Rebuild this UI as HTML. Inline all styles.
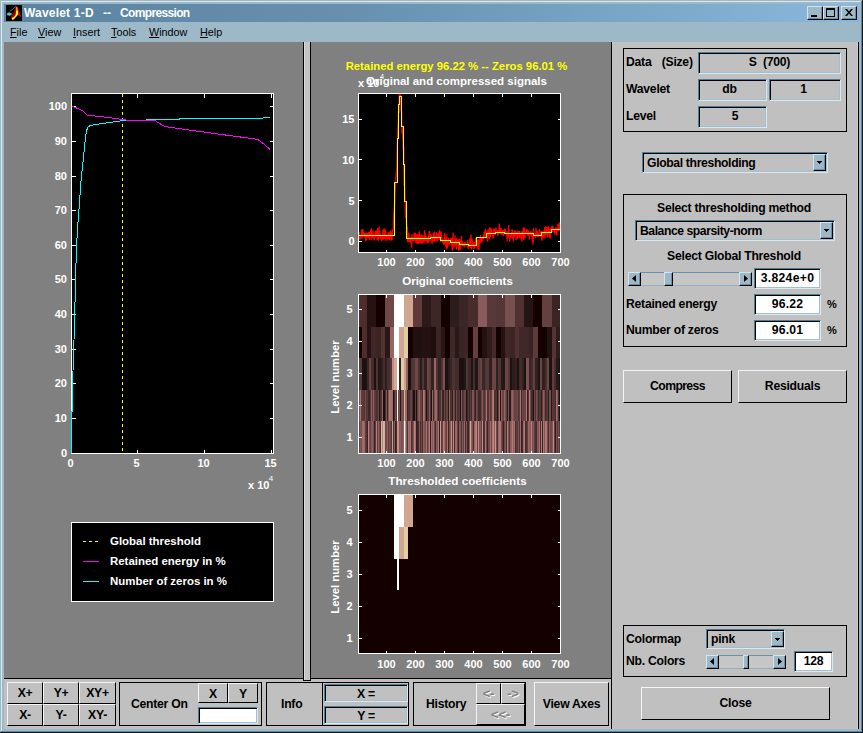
<!DOCTYPE html>
<html><head><meta charset="utf-8"><title>Wavelet 1-D -- Compression</title>
<style>
*{box-sizing:border-box;margin:0;padding:0}
html,body{width:863px;height:733px;overflow:hidden;background:#9db9c8}
body{position:relative;font-family:"Liberation Sans",sans-serif;font-size:12px;color:#000}
.a{position:absolute}
.ui{font-weight:bold;font-size:12.2px;letter-spacing:-.25px;line-height:14px;white-space:pre}
.btn{position:absolute;background:#c0c0c0;border-style:solid;border-width:1px;border-color:#f4f4f4 #000 #000 #f4f4f4;font-weight:bold;font-size:12.2px;letter-spacing:-.25px;text-align:center;white-space:pre}
.sunk{position:absolute;background:#c0c0c0;border-style:solid;border-width:1px;border-color:#4c7c9c #dce8f0 #dce8f0 #4c7c9c;box-shadow:inset 1px 1px 0 #000,inset -1px -1px 0 #a0c0d0;font-weight:bold;font-size:12.2px;letter-spacing:-.25px;text-align:center;white-space:pre}
.white{background:#fff}
.frame{position:absolute;border:1px solid #000}
.sb{position:absolute;background:#9db9c8;border-style:solid;border-width:1px;border-color:#d4e4ee #000 #000 #d4e4ee;box-shadow:inset -1px -1px 0 #6a8ea8}
.trk{position:absolute;background:#c6c6c6;border-top:1px solid #6a90aa;border-bottom:1px solid #8fb2c8}
svg{position:absolute;overflow:visible}
.pt{font-family:"Liberation Sans",sans-serif;font-weight:bold;font-size:11px;fill:#fff}
</style></head><body>
<!-- window border -->
<div class="a" style="left:1px;top:1px;width:860px;height:1px;background:#dce8ee"></div>
<div class="a" style="left:1px;top:1px;width:1px;height:730px;background:#dce8ee"></div>
<div class="a" style="left:861px;top:1px;width:1px;height:731px;background:#5a86a6"></div>
<div class="a" style="left:1px;top:731px;width:861px;height:1px;background:#5a86a6"></div>
<div class="a" style="left:862px;top:0;width:1px;height:733px;background:#101820"></div>
<div class="a" style="left:0;top:732px;width:863px;height:1px;background:#101820"></div>
<!-- title bar -->
<div class="a" style="left:4px;top:4px;width:855px;height:18px;background:linear-gradient(to right,#5a84a0 0%,#6690ae 40%,#8ab8dc 100%)"></div>
<svg style="left:6px;top:5px" width="16" height="16" viewBox="0 0 16 16"><rect width="16" height="16" fill="#000"/>
<path d="M4.4 6 L7 4 L9.7 1.3" stroke="#0e8484" stroke-width="1" fill="none"/>
<path d="M0.9 8.7 L2.6 7.6 L4.6 5.9" stroke="#0a5c5c" stroke-width=".8" fill="none"/>
<ellipse cx="3.2" cy="9.1" rx="2.6" ry="1.7" fill="#1fc4c4"/>
<ellipse cx="3.7" cy="9.1" rx="1.8" ry="1.1" fill="#a4a4a4"/>
<path d="M10 1 L11.5 2 L12.5 5 L14 9 L15.7 12.6 L13.6 11 L12 9.8 L10.4 11.5 L8.5 13.5 L6.8 15 L5.6 13.6 L5 11.5 L6 10 L8 7 L9.3 3.5 Z" fill="#e40000"/>
<path d="M9.3 4 L8 7 L6 10 L5.1 11.6 L6 12.6 L8.5 11 L9.6 8 L9.8 5 Z" fill="#8c0000"/>
<path d="M9.8 1.5 L11.4 2.2 L11.9 5.6 L10 5.6 Z" fill="#ff8a00"/>
<path d="M10 5.4 L11.9 5.4 L12 9.4 L10.8 11 L9 13 L7 15.1 L5.7 14 L6 12.9 L8 12 L9.6 10 L10 8 Z" fill="#ffff00"/>
</svg>
<div class="a" style="left:24px;top:5px;height:16px;line-height:16px;color:#fff;font-weight:bold;font-size:12px;white-space:pre;letter-spacing:.2px">Wavelet 1-D</div>
<div class="a" style="left:103px;top:5px;height:16px;line-height:16px;color:#fff;font-weight:bold;font-size:12px;white-space:pre">--</div>
<div class="a" style="left:120px;top:5px;height:16px;line-height:16px;color:#fff;font-weight:bold;font-size:12px;white-space:pre;letter-spacing:-.65px">Compression</div>
<!-- caption buttons -->
<div class="sb" style="left:807px;top:6px;width:16px;height:14px"></div>
<div class="a" style="left:811px;top:15px;width:6px;height:2px;background:#000"></div>
<div class="sb" style="left:823px;top:6px;width:16px;height:14px"></div>
<div class="a" style="left:826px;top:8px;width:9px;height:9px;border:1px solid #000;border-top-width:2px"></div>
<div class="sb" style="left:841px;top:6px;width:16px;height:14px"></div>
<svg style="left:845px;top:9px" width="8" height="7" viewBox="0 0 8 7"><path d="M0 0h2l2 2.4L6 0h2L5 3.5 8 7H6L4 4.6 2 7H0l3-3.5z" fill="#000"/></svg>
<!-- menu bar -->
<div class="a" style="left:4px;top:22px;width:855px;height:20px;background:#9db9c8"></div>
<div class="a" style="left:10px;top:24px;height:16px;line-height:16px;font-size:10.8px;white-space:pre"><u>F</u>ile</div>
<div class="a" style="left:38px;top:24px;height:16px;line-height:16px;font-size:10.8px;white-space:pre"><u>V</u>iew</div>
<div class="a" style="left:73px;top:24px;height:16px;line-height:16px;font-size:10.8px;white-space:pre"><u>I</u>nsert</div>
<div class="a" style="left:111px;top:24px;height:16px;line-height:16px;font-size:10.8px;white-space:pre"><u>T</u>ools</div>
<div class="a" style="left:149px;top:24px;height:16px;line-height:16px;font-size:10.8px;white-space:pre"><u>W</u>indow</div>
<div class="a" style="left:200px;top:24px;height:16px;line-height:16px;font-size:10.8px;white-space:pre"><u>H</u>elp</div>
<!-- client area -->
<div class="a" style="left:4px;top:42px;width:855px;height:687px;background:#c0c0c0"></div>
<div class="a" style="left:4px;top:42px;width:299px;height:636px;background:#808080"></div>
<div class="a" style="left:311px;top:42px;width:300px;height:636px;background:#808080"></div>
<div class="a" style="left:4px;top:678px;width:607px;height:1px;background:#000"></div>
<div class="a" style="left:303px;top:42px;width:8px;height:639px;background:#c4c4c4;border:1px solid #000;border-top:none;box-shadow:inset 1px 0 0 #dcdcdc"></div>
<div class="a" style="left:611px;top:42px;width:1px;height:687px;background:#000"></div>
<div class="a" style="left:857px;top:42px;width:1px;height:687px;background:#cdcdcd"></div>
<div class="a" style="left:858px;top:42px;width:1px;height:687px;background:#000"></div>
<!-- right panel -->
<div class="frame" style="left:623px;top:48px;width:224px;height:84px"></div>
<div class="a ui" style="left:626px;top:55px;word-spacing:2px">Data  (Size)</div>
<div class="a ui" style="left:626px;top:82px">Wavelet</div>
<div class="a ui" style="left:626px;top:109px">Level</div>
<div class="sunk" style="left:698px;top:52px;width:143px;height:22px;line-height:19px">S  (700)</div>
<div class="sunk" style="left:698px;top:79px;width:69px;height:22px;line-height:19px;padding-right:6px">db</div>
<div class="sunk" style="left:769px;top:79px;width:72px;height:22px;line-height:19px;padding-right:3px">1</div>
<div class="sunk" style="left:698px;top:106px;width:69px;height:22px;line-height:19px;padding-left:5px">5</div>

<div class="sunk" style="left:642px;top:152px;width:186px;height:21px;line-height:20px;text-align:left;padding-left:4px;letter-spacing:-.35px">Global thresholding</div>
<div class="sb" style="left:813px;top:154px;width:13px;height:17px"></div>
<svg style="left:817px;top:161px" width="5" height="3" shape-rendering="crispEdges"><path d="M0 0h5v1h-1v1h-1v1h-1v-1h-1v-1h-1z" fill="#000"/></svg>

<div class="frame" style="left:623px;top:194px;width:224px;height:153px"></div>
<div class="a ui" style="left:634px;top:201px;width:200px;text-align:center">Select thresholding method</div>
<div class="sunk" style="left:635px;top:220px;width:200px;height:21px;line-height:20px;text-align:left;padding-left:4px;letter-spacing:-.45px">Balance sparsity-norm</div>
<div class="sb" style="left:820px;top:222px;width:13px;height:17px"></div>
<svg style="left:824px;top:229px" width="5" height="3" shape-rendering="crispEdges"><path d="M0 0h5v1h-1v1h-1v1h-1v-1h-1v-1h-1z" fill="#000"/></svg>
<div class="a ui" style="left:634px;top:249px;width:200px;text-align:center">Select Global Threshold</div>
<div class="trk" style="left:628px;top:272px;width:124px;height:14px"></div>
<div class="sb" style="left:628px;top:272px;width:13px;height:14px"></div>
<svg style="left:632px;top:275px" width="4" height="7"><path d="M4 0v7L0 3.5z" fill="#000"/></svg>
<div class="sb" style="left:739px;top:272px;width:13px;height:14px"></div>
<svg style="left:744px;top:275px" width="4" height="7"><path d="M0 0v7l4-3.5z" fill="#000"/></svg>
<div class="sb" style="left:664px;top:272px;width:9px;height:14px"></div>
<div class="sunk white" style="left:754px;top:268px;width:67px;height:21px;line-height:18px;letter-spacing:.3px">3.824e+0</div>
<div class="a ui" style="left:626px;top:297px">Retained energy</div>
<div class="sunk white" style="left:754px;top:294px;width:67px;height:21px;line-height:18px;letter-spacing:.2px">96.22</div>
<div class="a ui" style="left:827px;top:297px;font-size:11px">%</div>
<div class="a ui" style="left:626px;top:323px">Number of zeros</div>
<div class="sunk white" style="left:754px;top:320px;width:67px;height:21px;line-height:18px;letter-spacing:.2px">96.01</div>
<div class="a ui" style="left:827px;top:323px;font-size:11px">%</div>

<div class="btn" style="left:623px;top:370px;width:109px;height:33px;line-height:30px;letter-spacing:-.6px">Compress</div>
<div class="btn" style="left:738px;top:370px;width:109px;height:33px;line-height:30px">Residuals</div>

<div class="frame" style="left:623px;top:625px;width:224px;height:52px"></div>
<div class="a ui" style="left:626px;top:632px">Colormap</div>
<div class="sunk" style="left:706px;top:629px;width:79px;height:20px;line-height:19px;text-align:left;padding-left:4px">pink</div>
<div class="sb" style="left:771px;top:631px;width:13px;height:16px"></div>
<svg style="left:775px;top:638px" width="5" height="3" shape-rendering="crispEdges"><path d="M0 0h5v1h-1v1h-1v1h-1v-1h-1v-1h-1z" fill="#000"/></svg>
<div class="a ui" style="left:626px;top:654px">Nb. Colors</div>
<div class="trk" style="left:706px;top:655px;width:80px;height:14px"></div>
<div class="sb" style="left:706px;top:655px;width:13px;height:14px"></div>
<svg style="left:710px;top:658px" width="4" height="7"><path d="M4 0v7L0 3.5z" fill="#000"/></svg>
<div class="sb" style="left:773px;top:655px;width:13px;height:14px"></div>
<svg style="left:778px;top:658px" width="4" height="7"><path d="M0 0v7l4-3.5z" fill="#000"/></svg>
<div class="sb" style="left:743px;top:655px;width:6px;height:14px"></div>
<div class="sunk white" style="left:794px;top:651px;width:39px;height:21px;line-height:18px">128</div>
<div class="btn" style="left:641px;top:687px;width:189px;height:33px;line-height:30px">Close</div>
<!-- bottom bar -->
<div class="btn" style="left:7px;top:682px;width:36px;height:22px;line-height:21px">X+</div>
<div class="btn" style="left:43px;top:682px;width:36px;height:22px;line-height:21px">Y+</div>
<div class="btn" style="left:79px;top:682px;width:37px;height:22px;line-height:21px">XY+</div>
<div class="btn" style="left:7px;top:704px;width:36px;height:22px;line-height:21px">X-</div>
<div class="btn" style="left:43px;top:704px;width:36px;height:22px;line-height:21px">Y-</div>
<div class="btn" style="left:79px;top:704px;width:37px;height:22px;line-height:21px">XY-</div>

<div class="frame" style="left:119px;top:682px;width:143px;height:44px"></div>
<div class="a ui" style="left:131px;top:697px">Center On</div>
<div class="btn" style="left:198px;top:683px;width:30px;height:20px;line-height:20px">X</div>
<div class="btn" style="left:228px;top:683px;width:30px;height:20px;line-height:20px">Y</div>
<div class="sunk white" style="left:198px;top:707px;width:60px;height:17px"></div>

<div class="frame" style="left:266px;top:682px;width:143px;height:44px"></div>
<div class="a" style="left:322px;top:682px;width:1px;height:44px;background:#000"></div>
<div class="a ui" style="left:281px;top:697px">Info</div>
<div class="sunk" style="left:324px;top:684px;width:84px;height:18px;line-height:19px">X =</div>
<div class="sunk" style="left:324px;top:706px;width:84px;height:18px;line-height:19px">Y =</div>

<div class="frame" style="left:413px;top:682px;width:113px;height:44px"></div>
<div class="a ui" style="left:426px;top:697px">History</div>
<div class="btn" style="left:476px;top:683px;width:25px;height:21px;line-height:20px;font-size:13px;color:#808080;text-shadow:1px 1px 0 #fff">&lt;-</div>
<div class="btn" style="left:501px;top:683px;width:24px;height:21px;line-height:20px;font-size:13px;color:#808080;text-shadow:1px 1px 0 #fff">-&gt;</div>
<div class="btn" style="left:476px;top:704px;width:49px;height:21px;line-height:20px;font-size:13px;color:#808080;text-shadow:1px 1px 0 #fff">&lt;&lt;-</div>
<div class="btn" style="left:534px;top:682px;width:75px;height:44px;line-height:43px">View Axes</div>
<svg style="left:0;top:0" width="863" height="733" viewBox="0 0 863 733">
<rect x="71.5" y="93.5" width="202.0" height="360.0" fill="#000"/>
<line x1="122.5" y1="93.5" x2="122.5" y2="453.5" stroke="#ffff00" stroke-width="1" stroke-dasharray="3,3" shape-rendering="crispEdges"/>
<g stroke="#fff" stroke-width="1" shape-rendering="crispEdges" fill="none"><rect x="71.5" y="93.5" width="202.0" height="360.0"/><line x1="71.5" y1="453.5" x2="75.5" y2="453.5"/><line x1="269.5" y1="453.5" x2="273.5" y2="453.5"/><line x1="71.5" y1="418.5" x2="75.5" y2="418.5"/><line x1="269.5" y1="418.5" x2="273.5" y2="418.5"/><line x1="71.5" y1="383.5" x2="75.5" y2="383.5"/><line x1="269.5" y1="383.5" x2="273.5" y2="383.5"/><line x1="71.5" y1="349.5" x2="75.5" y2="349.5"/><line x1="269.5" y1="349.5" x2="273.5" y2="349.5"/><line x1="71.5" y1="314.5" x2="75.5" y2="314.5"/><line x1="269.5" y1="314.5" x2="273.5" y2="314.5"/><line x1="71.5" y1="279.5" x2="75.5" y2="279.5"/><line x1="269.5" y1="279.5" x2="273.5" y2="279.5"/><line x1="71.5" y1="245.5" x2="75.5" y2="245.5"/><line x1="269.5" y1="245.5" x2="273.5" y2="245.5"/><line x1="71.5" y1="210.5" x2="75.5" y2="210.5"/><line x1="269.5" y1="210.5" x2="273.5" y2="210.5"/><line x1="71.5" y1="176.5" x2="75.5" y2="176.5"/><line x1="269.5" y1="176.5" x2="273.5" y2="176.5"/><line x1="71.5" y1="141.5" x2="75.5" y2="141.5"/><line x1="269.5" y1="141.5" x2="273.5" y2="141.5"/><line x1="71.5" y1="106.5" x2="75.5" y2="106.5"/><line x1="269.5" y1="106.5" x2="273.5" y2="106.5"/><line x1="71.5" y1="93.5" x2="71.5" y2="97.5"/><line x1="71.5" y1="449.5" x2="71.5" y2="453.5"/><line x1="137.5" y1="93.5" x2="137.5" y2="97.5"/><line x1="137.5" y1="449.5" x2="137.5" y2="453.5"/><line x1="204.5" y1="93.5" x2="204.5" y2="97.5"/><line x1="204.5" y1="449.5" x2="204.5" y2="453.5"/><line x1="271.5" y1="93.5" x2="271.5" y2="97.5"/><line x1="271.5" y1="449.5" x2="271.5" y2="453.5"/></g>
<polyline points="71.5,453.0 71.5,412.0 72.5,411.0 73.0,371.0 74.0,340.0 74.8,311.0 75.5,280.0 76.4,249.5 77.6,227.5 79.1,207.8 80.8,183.3 83.3,158.8 85.0,141.7 86.5,130.6 88.0,127.2 89.6,125.8 93.0,125.0 97.0,124.4 103.0,123.4 110.0,122.4 116.0,121.6 122.3,120.6 130.0,120.5 146.0,120.5 147.0,119.5 157.0,119.5 158.0,119.4 179.0,119.4 180.0,118.4 262.0,118.4 264.0,117.5 270.0,117.5" fill="none" stroke="#00ffff" stroke-width="1" shape-rendering="crispEdges"/>
<polyline points="71.8,106.0 76.0,107.8 82.0,110.4 85.0,113.0 87.5,115.2 92.0,115.6 97.0,116.2 104.0,117.0 110.0,117.7 116.0,118.6 122.3,119.5 130.0,120.5 140.0,120.5 155.0,120.5 158.0,122.5 162.0,124.8 165.0,126.6 172.0,127.6 179.0,128.6 190.0,130.2 200.0,131.5 215.0,133.6 230.0,135.6 245.0,137.6 255.0,139.0 258.0,139.7 262.0,142.5 266.0,146.0 270.0,149.3" fill="none" stroke="#ff00ff" stroke-width="1" shape-rendering="crispEdges"/>
<text class="pt" x="67" y="457.3" text-anchor="end">0</text>
<text class="pt" x="67" y="422.3" text-anchor="end">10</text>
<text class="pt" x="67" y="387.3" text-anchor="end">20</text>
<text class="pt" x="67" y="353.3" text-anchor="end">30</text>
<text class="pt" x="67" y="318.3" text-anchor="end">40</text>
<text class="pt" x="67" y="283.3" text-anchor="end">50</text>
<text class="pt" x="67" y="249.3" text-anchor="end">60</text>
<text class="pt" x="67" y="214.3" text-anchor="end">70</text>
<text class="pt" x="67" y="180.3" text-anchor="end">80</text>
<text class="pt" x="67" y="145.3" text-anchor="end">90</text>
<text class="pt" x="67" y="110.3" text-anchor="end">100</text>
<text class="pt" x="70.6" y="466.6" text-anchor="middle">0</text>
<text class="pt" x="136.6" y="466.6" text-anchor="middle">5</text>
<text class="pt" x="203.6" y="466.6" text-anchor="middle">10</text>
<text class="pt" x="270.6" y="466.6" text-anchor="middle">15</text>
<text class="pt" x="248" y="489">x 10</text><text class="pt" x="268.8" y="480.6" style="font-size:8px;font-weight:normal">4</text>
<rect x="71.5" y="522.5" width="202" height="79" fill="#000" stroke="#fff" shape-rendering="crispEdges"/>
<line x1="83" y1="541.5" x2="99" y2="541.5" stroke="#ffff00" stroke-dasharray="3,3" shape-rendering="crispEdges"/>
<line x1="83" y1="561.5" x2="99" y2="561.5" stroke="#ff00ff" shape-rendering="crispEdges"/>
<line x1="83" y1="581.5" x2="99" y2="581.5" stroke="#00ffff" shape-rendering="crispEdges"/>
<text class="pt" x="110" y="545.3" style="font-size:11.45px">Global threshold</text>
<text class="pt" x="110" y="565.3" style="font-size:11.45px">Retained energy in %</text>
<text class="pt" x="110" y="585.3" style="font-size:11.45px">Number of zeros in %</text>
<text class="pt" x="456.5" y="69.6" text-anchor="middle" style="fill:#ffff00;font-size:11.3px">Retained energy 96.22 % -- Zeros 96.01 %</text>
<text class="pt" x="456.5" y="85" text-anchor="middle" style="font-size:11.5px">Original and compressed signals</text>
<text class="pt" x="358" y="87">x 10</text><text class="pt" x="380" y="79" style="font-size:7.5px;font-weight:normal">4</text>
<text class="pt" x="457.5" y="285" text-anchor="middle" style="font-size:11.5px">Original coefficients</text>
<text class="pt" x="457.5" y="485" text-anchor="middle" style="font-size:11.7px">Thresholded coefficients</text>
<rect x="358.5" y="93.5" width="202.0" height="159.0" fill="#000"/>
<path d="M358.0,234.6 L358.3,237.1 L358.6,234.7 L358.9,234.4 L359.2,232.3 L359.4,234.7 L359.7,239.1 L360.0,236.8 L360.3,238.8 L360.6,236.2 L360.9,236.7 L361.2,236.0 L361.5,229.9 L361.8,238.2 L362.0,237.1 L362.3,237.0 L362.6,229.8 L362.9,229.6 L363.2,232.5 L363.5,233.9 L363.8,236.4 L364.1,235.2 L364.4,237.1 L364.6,233.3 L364.9,236.4 L365.2,236.7 L365.5,233.2 L365.8,241.1 L366.1,237.2 L366.4,239.4 L366.7,233.4 L367.0,233.0 L367.2,234.3 L367.5,235.0 L367.8,237.5 L368.1,236.2 L368.4,233.9 L368.7,232.2 L369.0,233.7 L369.3,239.4 L369.6,232.7 L369.8,236.2 L370.1,236.8 L370.4,230.5 L370.7,235.6 L371.0,239.7 L371.3,228.8 L371.6,234.3 L371.9,235.0 L372.2,232.7 L372.4,237.0 L372.7,235.2 L373.0,230.6 L373.3,238.1 L373.6,237.6 L373.9,238.5 L374.2,240.2 L374.5,236.6 L374.8,235.8 L375.1,231.1 L375.3,237.4 L375.6,233.4 L375.9,233.9 L376.2,231.2 L376.5,232.2 L376.8,233.6 L377.1,239.7 L377.4,228.7 L377.7,230.6 L377.9,236.2 L378.2,240.2 L378.5,237.3 L378.8,229.1 L379.1,227.1 L379.4,236.6 L379.7,233.0 L380.0,231.7 L380.3,238.6 L380.5,239.0 L380.8,235.9 L381.1,236.2 L381.4,236.8 L381.7,240.7 L382.0,237.4 L382.3,237.1 L382.6,237.2 L382.9,230.2 L383.1,239.6 L383.4,238.6 L383.7,237.1 L384.0,228.9 L384.3,233.3 L384.6,238.2 L384.9,229.4 L385.2,234.8 L385.5,238.8 L385.7,231.1 L386.0,240.7 L386.3,237.2 L386.6,234.9 L386.9,236.5 L387.2,237.5 L387.5,235.8 L387.8,239.2 L388.1,233.2 L388.3,234.0 L388.6,238.8 L388.9,235.5 L389.2,232.5 L389.5,238.5 L389.8,240.2 L390.1,233.9 L390.4,230.8 L390.7,235.0 L390.9,234.9 L391.2,234.4 L391.5,240.0 L391.8,232.0 L392.1,239.6 L392.4,231.2 L392.7,229.9 L393.0,231.0 L393.3,228.9 L393.5,222.7 L393.8,215.3 L394.1,211.0 L394.4,205.4 L394.7,201.6 L395.0,191.7 L395.3,188.1 L395.6,184.0 L395.9,176.8 L396.1,176.6 L396.4,171.3 L396.7,174.7 L397.0,161.2 L397.3,146.8 L397.6,136.5 L397.9,127.9 L398.2,123.6 L398.5,111.7 L398.7,110.3 L399.0,112.7 L399.3,94.0 L399.6,94.0 L399.9,95.5 L400.2,94.0 L400.5,95.4 L400.8,96.8 L401.1,107.6 L401.3,110.6 L401.6,111.8 L401.9,133.1 L402.2,127.7 L402.5,128.5 L402.8,136.6 L403.1,141.5 L403.4,150.4 L403.7,146.1 L403.9,167.6 L404.2,185.2 L404.5,180.4 L404.8,192.0 L405.1,203.1 L405.4,208.4 L405.7,217.5 L406.0,206.4 L406.3,218.9 L406.5,222.8 L406.8,231.6 L407.1,235.7 L407.4,227.1 L407.7,241.8 L408.0,233.4 L408.3,240.5 L408.6,233.3 L408.9,238.8 L409.2,242.1 L409.4,237.7 L409.7,238.8 L410.0,240.8 L410.3,238.7 L410.6,237.9 L410.9,243.3 L411.2,241.7 L411.5,237.2 L411.8,247.3 L412.0,234.4 L412.3,241.2 L412.6,237.3 L412.9,238.6 L413.2,240.5 L413.5,238.9 L413.8,240.3 L414.1,233.2 L414.4,233.2 L414.6,240.2 L414.9,235.0 L415.2,234.8 L415.5,233.3 L415.8,242.4 L416.1,240.7 L416.4,243.1 L416.7,235.1 L417.0,238.2 L417.2,234.4 L417.5,240.7 L417.8,243.4 L418.1,235.3 L418.4,243.3 L418.7,241.5 L419.0,237.6 L419.3,231.7 L419.6,242.8 L419.8,237.9 L420.1,236.2 L420.4,239.5 L420.7,239.6 L421.0,243.1 L421.3,234.8 L421.6,241.9 L421.9,243.1 L422.2,243.0 L422.4,237.6 L422.7,235.7 L423.0,241.6 L423.3,238.6 L423.6,238.6 L423.9,242.9 L424.2,237.3 L424.5,230.6 L424.8,236.7 L425.0,231.9 L425.3,240.7 L425.6,239.0 L425.9,236.0 L426.2,238.0 L426.5,240.7 L426.8,238.3 L427.1,242.4 L427.4,237.8 L427.6,241.2 L427.9,242.7 L428.2,243.1 L428.5,235.6 L428.8,240.7 L429.1,231.6 L429.4,234.2 L429.7,231.3 L430.0,241.3 L430.2,233.7 L430.5,237.6 L430.8,237.0 L431.1,237.5 L431.4,235.6 L431.7,238.4 L432.0,243.5 L432.3,237.7 L432.6,239.4 L432.8,240.9 L433.1,236.9 L433.4,233.4 L433.7,235.6 L434.0,240.9 L434.3,232.0 L434.6,236.1 L434.9,241.4 L435.2,240.7 L435.4,238.1 L435.7,240.7 L436.0,238.6 L436.3,234.2 L436.6,232.7 L436.9,235.8 L437.2,240.9 L437.5,236.7 L437.8,235.5 L438.0,236.0 L438.3,233.5 L438.6,238.1 L438.9,234.6 L439.2,239.7 L439.5,230.7 L439.8,239.6 L440.1,236.4 L440.4,232.1 L440.6,241.6 L440.9,238.3 L441.2,231.8 L441.5,236.3 L441.8,240.1 L442.1,237.7 L442.4,241.8 L442.7,241.6 L443.0,241.4 L443.3,240.3 L443.5,244.2 L443.8,242.0 L444.1,241.3 L444.4,233.3 L444.7,243.1 L445.0,244.5 L445.3,239.2 L445.6,238.6 L445.9,246.6 L446.1,234.4 L446.4,242.4 L446.7,248.8 L447.0,237.8 L447.3,243.4 L447.6,247.4 L447.9,240.7 L448.2,243.0 L448.5,244.1 L448.7,238.2 L449.0,240.8 L449.3,242.1 L449.6,243.9 L449.9,241.0 L450.2,240.5 L450.5,238.1 L450.8,240.3 L451.1,244.4 L451.3,241.8 L451.6,238.6 L451.9,238.7 L452.2,250.3 L452.5,245.2 L452.8,243.6 L453.1,232.9 L453.4,244.3 L453.7,243.8 L453.9,247.8 L454.2,243.7 L454.5,242.0 L454.8,244.0 L455.1,235.8 L455.4,245.7 L455.7,243.3 L456.0,239.9 L456.3,247.4 L456.5,249.0 L456.8,238.4 L457.1,240.9 L457.4,244.0 L457.7,243.7 L458.0,241.7 L458.3,239.8 L458.6,250.1 L458.9,246.5 L459.1,239.6 L459.4,239.1 L459.7,249.2 L460.0,246.8 L460.3,249.5 L460.6,246.2 L460.9,240.7 L461.2,244.4 L461.5,236.4 L461.7,241.1 L462.0,243.5 L462.3,245.9 L462.6,241.8 L462.9,243.8 L463.2,245.7 L463.5,245.5 L463.8,246.3 L464.1,244.9 L464.3,243.2 L464.6,246.8 L464.9,244.4 L465.2,242.2 L465.5,242.8 L465.8,244.9 L466.1,244.5 L466.4,245.4 L466.7,244.9 L466.9,245.5 L467.2,244.5 L467.5,240.7 L467.8,246.3 L468.1,248.6 L468.4,246.5 L468.7,244.5 L469.0,246.6 L469.3,241.9 L469.5,238.8 L469.8,245.3 L470.1,242.0 L470.4,247.5 L470.7,241.5 L471.0,234.8 L471.3,240.3 L471.6,248.9 L471.9,242.5 L472.1,239.2 L472.4,241.2 L472.7,245.4 L473.0,245.4 L473.3,244.3 L473.6,248.6 L473.9,244.5 L474.2,242.3 L474.5,244.3 L474.7,247.8 L475.0,245.5 L475.3,245.7 L475.6,238.8 L475.9,241.9 L476.2,244.7 L476.5,241.4 L476.8,245.9 L477.1,242.7 L477.4,243.8 L477.6,240.1 L477.9,249.2 L478.2,244.9 L478.5,240.0 L478.8,241.1 L479.1,249.3 L479.4,239.6 L479.7,243.6 L480.0,242.4 L480.2,239.2 L480.5,235.3 L480.8,239.0 L481.1,239.6 L481.4,242.1 L481.7,241.0 L482.0,238.5 L482.3,241.2 L482.6,240.2 L482.8,237.5 L483.1,237.0 L483.4,236.0 L483.7,238.3 L484.0,232.5 L484.3,233.9 L484.6,236.0 L484.9,231.2 L485.2,234.6 L485.4,229.4 L485.7,233.7 L486.0,237.9 L486.3,237.9 L486.6,235.8 L486.9,234.4 L487.2,230.5 L487.5,241.2 L487.8,236.9 L488.0,238.8 L488.3,232.3 L488.6,234.6 L488.9,229.2 L489.2,237.8 L489.5,238.3 L489.8,228.0 L490.1,234.0 L490.4,236.3 L490.6,228.4 L490.9,228.2 L491.2,230.7 L491.5,232.1 L491.8,229.6 L492.1,234.3 L492.4,235.0 L492.7,236.1 L493.0,235.6 L493.2,238.2 L493.5,237.1 L493.8,228.9 L494.1,231.6 L494.4,229.7 L494.7,229.7 L495.0,233.0 L495.3,233.3 L495.6,234.7 L495.8,227.8 L496.1,229.0 L496.4,233.0 L496.7,232.4 L497.0,232.0 L497.3,232.9 L497.6,230.6 L497.9,235.4 L498.2,234.2 L498.4,233.0 L498.7,230.8 L499.0,232.5 L499.3,224.1 L499.6,229.8 L499.9,233.2 L500.2,228.1 L500.5,233.7 L500.8,233.5 L501.0,228.5 L501.3,232.2 L501.6,232.0 L501.9,234.6 L502.2,235.1 L502.5,232.9 L502.8,230.3 L503.1,232.6 L503.4,232.8 L503.6,235.5 L503.9,234.0 L504.2,230.7 L504.5,228.8 L504.8,232.0 L505.1,230.8 L505.4,229.6 L505.7,232.9 L506.0,231.6 L506.2,233.6 L506.5,235.0 L506.8,231.9 L507.1,240.9 L507.4,232.4 L507.7,237.1 L508.0,233.8 L508.3,237.1 L508.6,225.6 L508.8,230.9 L509.1,234.2 L509.4,235.4 L509.7,241.1 L510.0,234.5 L510.3,237.6 L510.6,236.1 L510.9,236.7 L511.2,235.3 L511.5,233.1 L511.7,235.3 L512.0,230.0 L512.3,237.5 L512.6,230.2 L512.9,234.4 L513.2,240.6 L513.5,232.9 L513.8,233.7 L514.1,237.4 L514.3,233.7 L514.6,230.9 L514.9,234.5 L515.2,235.5 L515.5,235.9 L515.8,231.1 L516.1,239.4 L516.4,239.1 L516.7,233.7 L516.9,234.5 L517.2,232.2 L517.5,238.3 L517.8,231.3 L518.1,235.8 L518.4,232.0 L518.7,231.3 L519.0,236.0 L519.3,238.0 L519.5,233.6 L519.8,231.4 L520.1,236.3 L520.4,233.4 L520.7,234.6 L521.0,238.6 L521.3,237.3 L521.6,231.9 L521.9,241.1 L522.1,233.6 L522.4,236.2 L522.7,231.5 L523.0,233.5 L523.3,227.8 L523.6,239.5 L523.9,238.1 L524.2,229.6 L524.5,228.6 L524.7,228.3 L525.0,237.5 L525.3,232.1 L525.6,233.4 L525.9,232.6 L526.2,233.2 L526.5,230.0 L526.8,233.7 L527.1,229.3 L527.3,233.8 L527.6,235.0 L527.9,235.5 L528.2,233.2 L528.5,231.0 L528.8,234.5 L529.1,232.4 L529.4,239.2 L529.7,236.5 L529.9,233.6 L530.2,232.8 L530.5,232.1 L530.8,231.3 L531.1,233.2 L531.4,235.4 L531.7,236.1 L532.0,236.3 L532.3,241.3 L532.5,232.1 L532.8,234.4 L533.1,244.0 L533.4,228.6 L533.7,233.1 L534.0,235.4 L534.3,235.3 L534.6,236.1 L534.9,234.0 L535.1,236.0 L535.4,235.0 L535.7,237.3 L536.0,228.2 L536.3,231.6 L536.6,234.5 L536.9,231.1 L537.2,231.0 L537.5,236.6 L537.7,232.3 L538.0,236.6 L538.3,236.9 L538.6,235.5 L538.9,235.4 L539.2,233.8 L539.5,229.5 L539.8,234.1 L540.1,235.7 L540.3,232.4 L540.6,233.8 L540.9,236.6 L541.2,231.3 L541.5,236.3 L541.8,240.3 L542.1,231.6 L542.4,233.9 L542.7,232.9 L542.9,238.5 L543.2,234.5 L543.5,236.4 L543.8,231.2 L544.1,233.4 L544.4,233.4 L544.7,227.6 L545.0,237.5 L545.3,235.7 L545.6,226.9 L545.8,234.6 L546.1,231.7 L546.4,233.7 L546.7,233.4 L547.0,227.2 L547.3,231.5 L547.6,237.1 L547.9,229.6 L548.2,228.1 L548.4,227.0 L548.7,226.9 L549.0,232.0 L549.3,236.5 L549.6,232.3 L549.9,231.7 L550.2,238.3 L550.5,229.2 L550.8,228.7 L551.0,232.7 L551.3,232.7 L551.6,227.6 L551.9,226.5 L552.2,231.3 L552.5,231.2 L552.8,226.1 L553.1,229.7 L553.4,228.6 L553.6,231.9 L553.9,230.0 L554.2,230.1 L554.5,229.2 L554.8,233.3 L555.1,234.4 L555.4,228.6 L555.7,232.6 L556.0,227.3 L556.2,230.1 L556.5,232.3 L556.8,234.8 L557.1,228.6 L557.4,229.6 L557.7,230.5 L558.0,224.4 L558.3,229.4 L558.6,227.1 L558.8,230.5 L559.1,225.6 L559.4,222.8 L559.7,229.4 L560.0,230.2" fill="none" stroke="#ff0000" stroke-width="1.3" stroke-linejoin="round"/>
<polyline points="358.5,235.5 394.5,235.5 394.5,182.5 397.5,182.5 397.5,138.5 398.5,138.5 398.5,104.5 399.5,104.5 399.5,96.5 401.5,96.5 401.5,126.5 403.5,126.5 403.5,164.5 404.5,164.5 404.5,201.5 406.5,201.5 406.5,238.5 430.5,238.5 430.5,237.5 440.5,237.5 440.5,240.5 450.5,240.5 450.5,242.5 459.5,242.5 459.5,244.5 468.5,244.5 468.5,245.5 476.5,245.5 476.5,237.5 486.5,237.5 486.5,233.5 495.5,233.5 495.5,232.5 504.5,232.5 504.5,233.5 533.5,233.5 533.5,235.5 541.5,235.5 541.5,232.5 551.5,232.5 551.5,229.5 560.5,229.5" fill="none" stroke="#ffff00" stroke-width="1" shape-rendering="crispEdges"/>
<g stroke="#fff" stroke-width="1" shape-rendering="crispEdges" fill="none"><rect x="358.5" y="93.5" width="202.0" height="159.0"/><line x1="386.5" y1="93.5" x2="386.5" y2="96.5"/><line x1="386.5" y1="249.5" x2="386.5" y2="252.5"/><line x1="415.5" y1="93.5" x2="415.5" y2="96.5"/><line x1="415.5" y1="249.5" x2="415.5" y2="252.5"/><line x1="444.5" y1="93.5" x2="444.5" y2="96.5"/><line x1="444.5" y1="249.5" x2="444.5" y2="252.5"/><line x1="473.5" y1="93.5" x2="473.5" y2="96.5"/><line x1="473.5" y1="249.5" x2="473.5" y2="252.5"/><line x1="502.5" y1="93.5" x2="502.5" y2="96.5"/><line x1="502.5" y1="249.5" x2="502.5" y2="252.5"/><line x1="531.5" y1="93.5" x2="531.5" y2="96.5"/><line x1="531.5" y1="249.5" x2="531.5" y2="252.5"/><line x1="560.5" y1="93.5" x2="560.5" y2="96.5"/><line x1="560.5" y1="249.5" x2="560.5" y2="252.5"/><line x1="358.5" y1="241.5" x2="361.5" y2="241.5"/><line x1="557.5" y1="241.5" x2="560.5" y2="241.5"/><line x1="358.5" y1="200.5" x2="361.5" y2="200.5"/><line x1="557.5" y1="200.5" x2="560.5" y2="200.5"/><line x1="358.5" y1="159.5" x2="361.5" y2="159.5"/><line x1="557.5" y1="159.5" x2="560.5" y2="159.5"/><line x1="358.5" y1="119.5" x2="361.5" y2="119.5"/><line x1="557.5" y1="119.5" x2="560.5" y2="119.5"/></g>
<text class="pt" x="354.5" y="245.3" text-anchor="end">0</text>
<text class="pt" x="354.5" y="204.6" text-anchor="end">5</text>
<text class="pt" x="354.5" y="163.8" text-anchor="end">10</text>
<text class="pt" x="354.5" y="123.1" text-anchor="end">15</text>
<text class="pt" x="386.5" y="266" text-anchor="middle">100</text>
<text class="pt" x="415.5" y="266" text-anchor="middle">200</text>
<text class="pt" x="444.5" y="266" text-anchor="middle">300</text>
<text class="pt" x="473.5" y="266" text-anchor="middle">400</text>
<text class="pt" x="502.5" y="266" text-anchor="middle">500</text>
<text class="pt" x="531.5" y="266" text-anchor="middle">600</text>
<text class="pt" x="560.5" y="266" text-anchor="middle">700</text>
<g shape-rendering="crispEdges">
<rect x="358.5" y="294.5" width="202.0" height="159.0" fill="#150000"/>
<rect x="359.00" y="295.0" width="7.72" height="32.1" fill="#502d2d"/><rect x="366.67" y="295.0" width="9.30" height="32.1" fill="#261212"/><rect x="375.92" y="295.0" width="9.30" height="32.1" fill="#150000"/><rect x="385.17" y="295.0" width="9.30" height="32.1" fill="#704848"/><rect x="394.41" y="295.0" width="9.30" height="32.1" fill="#ffffff"/><rect x="403.66" y="295.0" width="9.30" height="32.1" fill="#d0a690"/><rect x="412.91" y="295.0" width="9.30" height="32.1" fill="#603a3a"/><rect x="422.16" y="295.0" width="9.30" height="32.1" fill="#2a1a1a"/><rect x="431.41" y="295.0" width="9.30" height="32.1" fill="#3c2626"/><rect x="440.65" y="295.0" width="9.30" height="32.1" fill="#150000"/><rect x="449.90" y="295.0" width="9.30" height="32.1" fill="#2d1c1c"/><rect x="459.15" y="295.0" width="9.30" height="32.1" fill="#3a2626"/><rect x="468.40" y="295.0" width="9.30" height="32.1" fill="#482c2c"/><rect x="477.65" y="295.0" width="9.30" height="32.1" fill="#885c5c"/><rect x="486.89" y="295.0" width="9.30" height="32.1" fill="#583838"/><rect x="496.14" y="295.0" width="9.30" height="32.1" fill="#543636"/><rect x="505.39" y="295.0" width="9.30" height="32.1" fill="#785050"/><rect x="514.64" y="295.0" width="9.30" height="32.1" fill="#503030"/><rect x="523.89" y="295.0" width="9.30" height="32.1" fill="#261414"/><rect x="533.13" y="295.0" width="9.30" height="32.1" fill="#150000"/><rect x="542.38" y="295.0" width="9.30" height="32.1" fill="#644040"/><rect x="551.63" y="295.0" width="8.42" height="32.1" fill="#3c2424"/>
<rect x="359.00" y="326.6" width="3.10" height="32.1" fill="#150000"/><rect x="362.05" y="326.6" width="4.67" height="32.1" fill="#502d2d"/><rect x="366.67" y="326.6" width="4.67" height="32.1" fill="#261212"/><rect x="371.29" y="326.6" width="4.67" height="32.1" fill="#402626"/><rect x="375.92" y="326.6" width="4.67" height="32.1" fill="#3c2424"/><rect x="380.54" y="326.6" width="4.67" height="32.1" fill="#543232"/><rect x="385.17" y="326.6" width="4.67" height="32.1" fill="#2a1818"/><rect x="389.79" y="326.6" width="4.67" height="32.1" fill="#986464"/><rect x="394.41" y="326.6" width="4.67" height="32.1" fill="#ffffff"/><rect x="399.04" y="326.6" width="4.67" height="32.1" fill="#d0a690"/><rect x="403.66" y="326.6" width="4.67" height="32.1" fill="#e0cea0"/><rect x="408.29" y="326.6" width="4.67" height="32.1" fill="#150000"/><rect x="412.91" y="326.6" width="4.67" height="32.1" fill="#201010"/><rect x="417.53" y="326.6" width="4.67" height="32.1" fill="#201010"/><rect x="422.16" y="326.6" width="4.67" height="32.1" fill="#241212"/><rect x="426.78" y="326.6" width="4.67" height="32.1" fill="#241212"/><rect x="431.41" y="326.6" width="4.67" height="32.1" fill="#1e0e0e"/><rect x="436.03" y="326.6" width="4.67" height="32.1" fill="#3c2424"/><rect x="440.65" y="326.6" width="4.67" height="32.1" fill="#281616"/><rect x="445.28" y="326.6" width="4.67" height="32.1" fill="#150000"/><rect x="449.90" y="326.6" width="4.67" height="32.1" fill="#402828"/><rect x="454.53" y="326.6" width="4.67" height="32.1" fill="#281818"/><rect x="459.15" y="326.6" width="4.67" height="32.1" fill="#382424"/><rect x="463.77" y="326.6" width="4.67" height="32.1" fill="#3c2626"/><rect x="468.40" y="326.6" width="4.67" height="32.1" fill="#150000"/><rect x="473.02" y="326.6" width="4.67" height="32.1" fill="#644040"/><rect x="477.65" y="326.6" width="4.67" height="32.1" fill="#150000"/><rect x="482.27" y="326.6" width="4.67" height="32.1" fill="#241212"/><rect x="486.89" y="326.6" width="4.67" height="32.1" fill="#301c1c"/><rect x="491.52" y="326.6" width="4.67" height="32.1" fill="#442a2a"/><rect x="496.14" y="326.6" width="4.67" height="32.1" fill="#150000"/><rect x="500.77" y="326.6" width="4.67" height="32.1" fill="#241212"/><rect x="505.39" y="326.6" width="4.67" height="32.1" fill="#402626"/><rect x="510.01" y="326.6" width="4.67" height="32.1" fill="#3c2424"/><rect x="514.64" y="326.6" width="4.67" height="32.1" fill="#503030"/><rect x="519.26" y="326.6" width="4.67" height="32.1" fill="#402828"/><rect x="523.89" y="326.6" width="4.67" height="32.1" fill="#402828"/><rect x="528.51" y="326.6" width="4.67" height="32.1" fill="#382222"/><rect x="533.13" y="326.6" width="4.67" height="32.1" fill="#5c3a3a"/><rect x="537.76" y="326.6" width="4.67" height="32.1" fill="#150000"/><rect x="542.38" y="326.6" width="4.67" height="32.1" fill="#150000"/><rect x="547.01" y="326.6" width="4.67" height="32.1" fill="#241212"/><rect x="551.63" y="326.6" width="4.67" height="32.1" fill="#543434"/><rect x="556.25" y="326.6" width="3.80" height="32.1" fill="#301c1c"/>
<rect x="359.00" y="358.2" width="0.78" height="32.1" fill="#5a3b3b"/><rect x="359.73" y="358.2" width="2.36" height="32.1" fill="#5a3b3b"/><rect x="362.05" y="358.2" width="2.36" height="32.1" fill="#1b1111"/><rect x="364.36" y="358.2" width="2.36" height="32.1" fill="#1b1111"/><rect x="366.67" y="358.2" width="2.36" height="32.1" fill="#3a2626"/><rect x="368.98" y="358.2" width="2.36" height="32.1" fill="#694545"/><rect x="371.29" y="358.2" width="2.36" height="32.1" fill="#452d2d"/><rect x="373.61" y="358.2" width="2.36" height="32.1" fill="#1b1111"/><rect x="375.92" y="358.2" width="2.36" height="32.1" fill="#4e3333"/><rect x="378.23" y="358.2" width="2.36" height="32.1" fill="#221616"/><rect x="380.54" y="358.2" width="2.36" height="32.1" fill="#2f1f1f"/><rect x="382.85" y="358.2" width="2.36" height="32.1" fill="#442d2d"/><rect x="385.17" y="358.2" width="2.36" height="32.1" fill="#2e1e1e"/><rect x="387.48" y="358.2" width="2.36" height="32.1" fill="#472f2f"/><rect x="389.79" y="358.2" width="2.36" height="32.1" fill="#543737"/><rect x="392.10" y="358.2" width="2.36" height="32.1" fill="#c68984"/><rect x="394.41" y="358.2" width="2.36" height="32.1" fill="#d0aa93"/><rect x="396.73" y="358.2" width="2.36" height="32.1" fill="#ffffff"/><rect x="399.04" y="358.2" width="2.36" height="32.1" fill="#372424"/><rect x="401.35" y="358.2" width="2.36" height="32.1" fill="#dccba4"/><rect x="403.66" y="358.2" width="2.36" height="32.1" fill="#cda18f"/><rect x="405.97" y="358.2" width="2.36" height="32.1" fill="#956262"/><rect x="408.29" y="358.2" width="2.36" height="32.1" fill="#1b1111"/><rect x="410.60" y="358.2" width="2.36" height="32.1" fill="#4e3333"/><rect x="412.91" y="358.2" width="2.36" height="32.1" fill="#543737"/><rect x="415.22" y="358.2" width="2.36" height="32.1" fill="#6e4848"/><rect x="417.53" y="358.2" width="2.36" height="32.1" fill="#472f2f"/><rect x="419.85" y="358.2" width="2.36" height="32.1" fill="#2a1c1c"/><rect x="422.16" y="358.2" width="2.36" height="32.1" fill="#513535"/><rect x="424.47" y="358.2" width="2.36" height="32.1" fill="#332121"/><rect x="426.78" y="358.2" width="2.36" height="32.1" fill="#6d4747"/><rect x="429.09" y="358.2" width="2.36" height="32.1" fill="#5e3d3d"/><rect x="431.41" y="358.2" width="2.36" height="32.1" fill="#342222"/><rect x="433.72" y="358.2" width="2.36" height="32.1" fill="#9c6666"/><rect x="436.03" y="358.2" width="2.36" height="32.1" fill="#4c3232"/><rect x="438.34" y="358.2" width="2.36" height="32.1" fill="#332222"/><rect x="440.65" y="358.2" width="2.36" height="32.1" fill="#513535"/><rect x="442.97" y="358.2" width="2.36" height="32.1" fill="#7c5151"/><rect x="445.28" y="358.2" width="2.36" height="32.1" fill="#1b1111"/><rect x="447.59" y="358.2" width="2.36" height="32.1" fill="#2a1c1c"/><rect x="449.90" y="358.2" width="2.36" height="32.1" fill="#3b2727"/><rect x="452.21" y="358.2" width="2.36" height="32.1" fill="#4d3232"/><rect x="454.53" y="358.2" width="2.36" height="32.1" fill="#432c2c"/><rect x="456.84" y="358.2" width="2.36" height="32.1" fill="#432c2c"/><rect x="459.15" y="358.2" width="2.36" height="32.1" fill="#1b1111"/><rect x="461.46" y="358.2" width="2.36" height="32.1" fill="#1b1111"/><rect x="463.77" y="358.2" width="2.36" height="32.1" fill="#231717"/><rect x="466.09" y="358.2" width="2.36" height="32.1" fill="#503535"/><rect x="468.40" y="358.2" width="2.36" height="32.1" fill="#3b2727"/><rect x="470.71" y="358.2" width="2.36" height="32.1" fill="#201515"/><rect x="473.02" y="358.2" width="2.36" height="32.1" fill="#452d2d"/><rect x="475.33" y="358.2" width="2.36" height="32.1" fill="#211515"/><rect x="477.65" y="358.2" width="2.36" height="32.1" fill="#5a3b3b"/><rect x="479.96" y="358.2" width="2.36" height="32.1" fill="#664242"/><rect x="482.27" y="358.2" width="2.36" height="32.1" fill="#392626"/><rect x="484.58" y="358.2" width="2.36" height="32.1" fill="#523636"/><rect x="486.89" y="358.2" width="2.36" height="32.1" fill="#573939"/><rect x="489.21" y="358.2" width="2.36" height="32.1" fill="#312020"/><rect x="491.52" y="358.2" width="2.36" height="32.1" fill="#694545"/><rect x="493.83" y="358.2" width="2.36" height="32.1" fill="#6b4646"/><rect x="496.14" y="358.2" width="2.36" height="32.1" fill="#312020"/><rect x="498.45" y="358.2" width="2.36" height="32.1" fill="#4f3434"/><rect x="500.77" y="358.2" width="2.36" height="32.1" fill="#251919"/><rect x="503.08" y="358.2" width="2.36" height="32.1" fill="#211515"/><rect x="505.39" y="358.2" width="2.36" height="32.1" fill="#694545"/><rect x="507.70" y="358.2" width="2.36" height="32.1" fill="#533636"/><rect x="510.01" y="358.2" width="2.36" height="32.1" fill="#1b1111"/><rect x="512.33" y="358.2" width="2.36" height="32.1" fill="#2d1d1d"/><rect x="514.64" y="358.2" width="2.36" height="32.1" fill="#322121"/><rect x="516.95" y="358.2" width="2.36" height="32.1" fill="#1b1111"/><rect x="519.26" y="358.2" width="2.36" height="32.1" fill="#452d2d"/><rect x="521.57" y="358.2" width="2.36" height="32.1" fill="#332222"/><rect x="523.89" y="358.2" width="2.36" height="32.1" fill="#1b1111"/><rect x="526.20" y="358.2" width="2.36" height="32.1" fill="#7b5151"/><rect x="528.51" y="358.2" width="2.36" height="32.1" fill="#372424"/><rect x="530.82" y="358.2" width="2.36" height="32.1" fill="#452d2d"/><rect x="533.13" y="358.2" width="2.36" height="32.1" fill="#614040"/><rect x="535.45" y="358.2" width="2.36" height="32.1" fill="#332121"/><rect x="537.76" y="358.2" width="2.36" height="32.1" fill="#1d1313"/><rect x="540.07" y="358.2" width="2.36" height="32.1" fill="#6a4545"/><rect x="542.38" y="358.2" width="2.36" height="32.1" fill="#301f1f"/><rect x="544.69" y="358.2" width="2.36" height="32.1" fill="#482f2f"/><rect x="547.01" y="358.2" width="2.36" height="32.1" fill="#6d4747"/><rect x="549.32" y="358.2" width="2.36" height="32.1" fill="#1b1111"/><rect x="551.63" y="358.2" width="2.36" height="32.1" fill="#5d3d3d"/><rect x="553.94" y="358.2" width="2.36" height="32.1" fill="#472e2e"/><rect x="556.25" y="358.2" width="2.36" height="32.1" fill="#261919"/><rect x="558.57" y="358.2" width="1.48" height="32.1" fill="#1b1111"/>
<rect x="359" y="389.8" width="1" height="32.1" fill="#7a5050"/><rect x="360" y="389.8" width="1" height="32.1" fill="#b17474"/><rect x="361" y="389.8" width="2" height="32.1" fill="#5e3d3d"/><rect x="363" y="389.8" width="1" height="32.1" fill="#573939"/><rect x="364" y="389.8" width="1" height="32.1" fill="#513535"/><rect x="365" y="389.8" width="1" height="32.1" fill="#764d4d"/><rect x="366" y="389.8" width="1" height="32.1" fill="#513535"/><rect x="367" y="389.8" width="1" height="32.1" fill="#573939"/><rect x="368" y="389.8" width="2" height="32.1" fill="#3c2828"/><rect x="370" y="389.8" width="1" height="32.1" fill="#543737"/><rect x="371" y="389.8" width="1" height="32.1" fill="#8f5d5d"/><rect x="372" y="389.8" width="1" height="32.1" fill="#644141"/><rect x="373" y="389.8" width="1" height="32.1" fill="#8f5d5d"/><rect x="374" y="389.8" width="1" height="32.1" fill="#603f3f"/><rect x="375" y="389.8" width="1" height="32.1" fill="#563838"/><rect x="376" y="389.8" width="2" height="32.1" fill="#493030"/><rect x="378" y="389.8" width="1" height="32.1" fill="#6a4646"/><rect x="379" y="389.8" width="1" height="32.1" fill="#211515"/><rect x="380" y="389.8" width="1" height="32.1" fill="#482f2f"/><rect x="381" y="389.8" width="1" height="32.1" fill="#553737"/><rect x="382" y="389.8" width="1" height="32.1" fill="#905e5e"/><rect x="383" y="389.8" width="2" height="32.1" fill="#1b1111"/><rect x="385" y="389.8" width="1" height="32.1" fill="#452d2d"/><rect x="386" y="389.8" width="1" height="32.1" fill="#805454"/><rect x="387" y="389.8" width="1" height="32.1" fill="#3b2727"/><rect x="388" y="389.8" width="1" height="32.1" fill="#825555"/><rect x="389" y="389.8" width="1" height="32.1" fill="#b57676"/><rect x="390" y="389.8" width="2" height="32.1" fill="#aa7070"/><rect x="392" y="389.8" width="1" height="32.1" fill="#a26a6a"/><rect x="393" y="389.8" width="1" height="32.1" fill="#1b1111"/><rect x="394" y="389.8" width="1" height="32.1" fill="#4a3030"/><rect x="395" y="389.8" width="1" height="32.1" fill="#714a4a"/><rect x="396" y="389.8" width="1" height="32.1" fill="#5e3d3d"/><rect x="397" y="389.8" width="1" height="32.1" fill="#ffffff"/><rect x="398" y="389.8" width="2" height="32.1" fill="#764d4d"/><rect x="400" y="389.8" width="1" height="32.1" fill="#251818"/><rect x="401" y="389.8" width="1" height="32.1" fill="#754c4c"/><rect x="402" y="389.8" width="1" height="32.1" fill="#784e4e"/><rect x="403" y="389.8" width="1" height="32.1" fill="#744c4c"/><rect x="404" y="389.8" width="1" height="32.1" fill="#d5b89a"/><rect x="405" y="389.8" width="2" height="32.1" fill="#a06868"/><rect x="407" y="389.8" width="1" height="32.1" fill="#3b2626"/><rect x="408" y="389.8" width="1" height="32.1" fill="#4c3232"/><rect x="409" y="389.8" width="1" height="32.1" fill="#4d3232"/><rect x="410" y="389.8" width="1" height="32.1" fill="#603f3f"/><rect x="411" y="389.8" width="1" height="32.1" fill="#6c4747"/><rect x="412" y="389.8" width="1" height="32.1" fill="#482f2f"/><rect x="413" y="389.8" width="2" height="32.1" fill="#1b1111"/><rect x="415" y="389.8" width="1" height="32.1" fill="#5d3d3d"/><rect x="416" y="389.8" width="1" height="32.1" fill="#1b1111"/><rect x="417" y="389.8" width="1" height="32.1" fill="#634141"/><rect x="418" y="389.8" width="1" height="32.1" fill="#7d5252"/><rect x="419" y="389.8" width="1" height="32.1" fill="#966262"/><rect x="420" y="389.8" width="2" height="32.1" fill="#664242"/><rect x="422" y="389.8" width="1" height="32.1" fill="#4a3131"/><rect x="423" y="389.8" width="1" height="32.1" fill="#b57676"/><rect x="424" y="389.8" width="1" height="32.1" fill="#9e6767"/><rect x="425" y="389.8" width="1" height="32.1" fill="#624040"/><rect x="426" y="389.8" width="1" height="32.1" fill="#1b1111"/><rect x="427" y="389.8" width="2" height="32.1" fill="#533636"/><rect x="429" y="389.8" width="1" height="32.1" fill="#865757"/><rect x="430" y="389.8" width="1" height="32.1" fill="#4e3333"/><rect x="431" y="389.8" width="1" height="32.1" fill="#1b1111"/><rect x="432" y="389.8" width="1" height="32.1" fill="#9b6565"/><rect x="433" y="389.8" width="1" height="32.1" fill="#3e2929"/><rect x="434" y="389.8" width="1" height="32.1" fill="#7d5252"/><rect x="435" y="389.8" width="2" height="32.1" fill="#9d6767"/><rect x="437" y="389.8" width="1" height="32.1" fill="#674343"/><rect x="438" y="389.8" width="1" height="32.1" fill="#342222"/><rect x="439" y="389.8" width="1" height="32.1" fill="#4f3434"/><rect x="440" y="389.8" width="1" height="32.1" fill="#4c3232"/><rect x="441" y="389.8" width="1" height="32.1" fill="#835656"/><rect x="442" y="389.8" width="2" height="32.1" fill="#362424"/><rect x="444" y="389.8" width="1" height="32.1" fill="#6b4646"/><rect x="445" y="389.8" width="1" height="32.1" fill="#493030"/><rect x="446" y="389.8" width="1" height="32.1" fill="#624040"/><rect x="447" y="389.8" width="1" height="32.1" fill="#674444"/><rect x="448" y="389.8" width="1" height="32.1" fill="#261919"/><rect x="449" y="389.8" width="1" height="32.1" fill="#976363"/><rect x="450" y="389.8" width="2" height="32.1" fill="#4d3232"/><rect x="452" y="389.8" width="1" height="32.1" fill="#2e1e1e"/><rect x="453" y="389.8" width="1" height="32.1" fill="#7b5050"/><rect x="454" y="389.8" width="1" height="32.1" fill="#664343"/><rect x="455" y="389.8" width="1" height="32.1" fill="#322121"/><rect x="456" y="389.8" width="1" height="32.1" fill="#6f4949"/><rect x="457" y="389.8" width="2" height="32.1" fill="#4b3131"/><rect x="459" y="389.8" width="1" height="32.1" fill="#533636"/><rect x="460" y="389.8" width="1" height="32.1" fill="#1b1111"/><rect x="461" y="389.8" width="1" height="32.1" fill="#855757"/><rect x="462" y="389.8" width="1" height="32.1" fill="#482f2f"/><rect x="463" y="389.8" width="1" height="32.1" fill="#553838"/><rect x="464" y="389.8" width="2" height="32.1" fill="#6c4747"/><rect x="466" y="389.8" width="1" height="32.1" fill="#1d1313"/><rect x="467" y="389.8" width="1" height="32.1" fill="#3d2828"/><rect x="468" y="389.8" width="1" height="32.1" fill="#573939"/><rect x="469" y="389.8" width="1" height="32.1" fill="#3a2626"/><rect x="470" y="389.8" width="1" height="32.1" fill="#5b3b3b"/><rect x="471" y="389.8" width="1" height="32.1" fill="#442d2d"/><rect x="472" y="389.8" width="2" height="32.1" fill="#7e5353"/><rect x="474" y="389.8" width="1" height="32.1" fill="#4b3131"/><rect x="475" y="389.8" width="1" height="32.1" fill="#312020"/><rect x="476" y="389.8" width="1" height="32.1" fill="#734b4b"/><rect x="477" y="389.8" width="1" height="32.1" fill="#654242"/><rect x="478" y="389.8" width="1" height="32.1" fill="#3d2828"/><rect x="479" y="389.8" width="2" height="32.1" fill="#422b2b"/><rect x="481" y="389.8" width="1" height="32.1" fill="#664343"/><rect x="482" y="389.8" width="1" height="32.1" fill="#845656"/><rect x="483" y="389.8" width="1" height="32.1" fill="#5f3e3e"/><rect x="484" y="389.8" width="1" height="32.1" fill="#4c3232"/><rect x="485" y="389.8" width="1" height="32.1" fill="#6b4646"/><rect x="486" y="389.8" width="1" height="32.1" fill="#ae7272"/><rect x="487" y="389.8" width="2" height="32.1" fill="#513535"/><rect x="489" y="389.8" width="1" height="32.1" fill="#7d5252"/><rect x="490" y="389.8" width="1" height="32.1" fill="#5c3c3c"/><rect x="491" y="389.8" width="1" height="32.1" fill="#674444"/><rect x="492" y="389.8" width="1" height="32.1" fill="#ab7070"/><rect x="493" y="389.8" width="1" height="32.1" fill="#b77878"/><rect x="494" y="389.8" width="2" height="32.1" fill="#4c3131"/><rect x="496" y="389.8" width="1" height="32.1" fill="#513535"/><rect x="497" y="389.8" width="1" height="32.1" fill="#231717"/><rect x="498" y="389.8" width="1" height="32.1" fill="#5e3d3d"/><rect x="499" y="389.8" width="1" height="32.1" fill="#a86e6e"/><rect x="500" y="389.8" width="1" height="32.1" fill="#201515"/><rect x="501" y="389.8" width="1" height="32.1" fill="#936060"/><rect x="502" y="389.8" width="2" height="32.1" fill="#6a4545"/><rect x="504" y="389.8" width="1" height="32.1" fill="#966262"/><rect x="505" y="389.8" width="1" height="32.1" fill="#7b5151"/><rect x="506" y="389.8" width="1" height="32.1" fill="#573939"/><rect x="507" y="389.8" width="1" height="32.1" fill="#2c1d1d"/><rect x="508" y="389.8" width="1" height="32.1" fill="#815454"/><rect x="509" y="389.8" width="2" height="32.1" fill="#271a1a"/><rect x="511" y="389.8" width="1" height="32.1" fill="#875959"/><rect x="512" y="389.8" width="1" height="32.1" fill="#956262"/><rect x="513" y="389.8" width="1" height="32.1" fill="#7d5252"/><rect x="514" y="389.8" width="1" height="32.1" fill="#634141"/><rect x="515" y="389.8" width="1" height="32.1" fill="#684444"/><rect x="516" y="389.8" width="2" height="32.1" fill="#6a4646"/><rect x="518" y="389.8" width="1" height="32.1" fill="#513535"/><rect x="519" y="389.8" width="1" height="32.1" fill="#5c3c3c"/><rect x="520" y="389.8" width="1" height="32.1" fill="#ac7171"/><rect x="521" y="389.8" width="1" height="32.1" fill="#3f2929"/><rect x="522" y="389.8" width="1" height="32.1" fill="#6d4747"/><rect x="523" y="389.8" width="1" height="32.1" fill="#624040"/><rect x="524" y="389.8" width="2" height="32.1" fill="#6c4646"/><rect x="526" y="389.8" width="1" height="32.1" fill="#b47676"/><rect x="527" y="389.8" width="1" height="32.1" fill="#2f1f1f"/><rect x="528" y="389.8" width="1" height="32.1" fill="#503535"/><rect x="529" y="389.8" width="1" height="32.1" fill="#b77878"/><rect x="530" y="389.8" width="1" height="32.1" fill="#704949"/><rect x="531" y="389.8" width="2" height="32.1" fill="#422b2b"/><rect x="533" y="389.8" width="1" height="32.1" fill="#1b1111"/><rect x="534" y="389.8" width="1" height="32.1" fill="#6c4747"/><rect x="535" y="389.8" width="1" height="32.1" fill="#4c3232"/><rect x="536" y="389.8" width="1" height="32.1" fill="#7b5050"/><rect x="537" y="389.8" width="1" height="32.1" fill="#664343"/><rect x="538" y="389.8" width="1" height="32.1" fill="#3b2727"/><rect x="539" y="389.8" width="2" height="32.1" fill="#533737"/><rect x="541" y="389.8" width="1" height="32.1" fill="#2e1e1e"/><rect x="542" y="389.8" width="1" height="32.1" fill="#5f3e3e"/><rect x="543" y="389.8" width="1" height="32.1" fill="#915f5f"/><rect x="544" y="389.8" width="1" height="32.1" fill="#784e4e"/><rect x="545" y="389.8" width="1" height="32.1" fill="#3f2929"/><rect x="546" y="389.8" width="2" height="32.1" fill="#563838"/><rect x="548" y="389.8" width="1" height="32.1" fill="#332222"/><rect x="549" y="389.8" width="1" height="32.1" fill="#724b4b"/><rect x="550" y="389.8" width="1" height="32.1" fill="#714a4a"/><rect x="551" y="389.8" width="1" height="32.1" fill="#261919"/><rect x="552" y="389.8" width="1" height="32.1" fill="#543737"/><rect x="553" y="389.8" width="2" height="32.1" fill="#533636"/><rect x="555" y="389.8" width="1" height="32.1" fill="#422b2b"/><rect x="556" y="389.8" width="1" height="32.1" fill="#a66d6d"/><rect x="557" y="389.8" width="1" height="32.1" fill="#805454"/><rect x="558" y="389.8" width="1" height="32.1" fill="#422b2b"/><rect x="559" y="389.8" width="1" height="32.1" fill="#1b1111"/>
<rect x="359" y="421.4" width="1" height="32.1" fill="#674444"/><rect x="360" y="421.4" width="1" height="32.1" fill="#825555"/><rect x="361" y="421.4" width="1" height="32.1" fill="#784f4f"/><rect x="362" y="421.4" width="1" height="32.1" fill="#a06868"/><rect x="363" y="421.4" width="1" height="32.1" fill="#a96f6f"/><rect x="364" y="421.4" width="1" height="32.1" fill="#966262"/><rect x="365" y="421.4" width="1" height="32.1" fill="#603f3f"/><rect x="366" y="421.4" width="1" height="32.1" fill="#4e3333"/><rect x="367" y="421.4" width="1" height="32.1" fill="#372424"/><rect x="368" y="421.4" width="1" height="32.1" fill="#c17e7e"/><rect x="369" y="421.4" width="1" height="32.1" fill="#784e4e"/><rect x="370" y="421.4" width="1" height="32.1" fill="#6b4646"/><rect x="371" y="421.4" width="1" height="32.1" fill="#825555"/><rect x="372" y="421.4" width="1" height="32.1" fill="#8f5d5d"/><rect x="373" y="421.4" width="1" height="32.1" fill="#764d4d"/><rect x="374" y="421.4" width="1" height="32.1" fill="#312020"/><rect x="375" y="421.4" width="1" height="32.1" fill="#5b3c3c"/><rect x="376" y="421.4" width="1" height="32.1" fill="#c07e7e"/><rect x="377" y="421.4" width="1" height="32.1" fill="#5e3d3d"/><rect x="378" y="421.4" width="1" height="32.1" fill="#936060"/><rect x="379" y="421.4" width="1" height="32.1" fill="#704949"/><rect x="380" y="421.4" width="1" height="32.1" fill="#493030"/><rect x="381" y="421.4" width="1" height="32.1" fill="#d4b699"/><rect x="382" y="421.4" width="1" height="32.1" fill="#c48381"/><rect x="383" y="421.4" width="1" height="32.1" fill="#d5b99b"/><rect x="384" y="421.4" width="1" height="32.1" fill="#d2b096"/><rect x="385" y="421.4" width="1" height="32.1" fill="#704949"/><rect x="386" y="421.4" width="1" height="32.1" fill="#734b4b"/><rect x="387" y="421.4" width="1" height="32.1" fill="#8b5b5b"/><rect x="388" y="421.4" width="1" height="32.1" fill="#624040"/><rect x="389" y="421.4" width="1" height="32.1" fill="#764d4d"/><rect x="390" y="421.4" width="1" height="32.1" fill="#6d4747"/><rect x="391" y="421.4" width="1" height="32.1" fill="#513535"/><rect x="392" y="421.4" width="1" height="32.1" fill="#cda18f"/><rect x="393" y="421.4" width="1" height="32.1" fill="#4e3333"/><rect x="394" y="421.4" width="1" height="32.1" fill="#8d5c5c"/><rect x="395" y="421.4" width="1" height="32.1" fill="#342222"/><rect x="396" y="421.4" width="1" height="32.1" fill="#462e2e"/><rect x="397" y="421.4" width="1" height="32.1" fill="#c89087"/><rect x="398" y="421.4" width="1" height="32.1" fill="#c68b84"/><rect x="399" y="421.4" width="1" height="32.1" fill="#8b5b5b"/><rect x="400" y="421.4" width="1" height="32.1" fill="#905e5e"/><rect x="401" y="421.4" width="1" height="32.1" fill="#794f4f"/><rect x="402" y="421.4" width="1" height="32.1" fill="#805454"/><rect x="403" y="421.4" width="1" height="32.1" fill="#8f5e5e"/><rect x="404" y="421.4" width="1" height="32.1" fill="#ffffff"/><rect x="405" y="421.4" width="1" height="32.1" fill="#c68b84"/><rect x="406" y="421.4" width="1" height="32.1" fill="#7e5353"/><rect x="407" y="421.4" width="1" height="32.1" fill="#523636"/><rect x="408" y="421.4" width="1" height="32.1" fill="#a96f6f"/><rect x="409" y="421.4" width="1" height="32.1" fill="#9b6565"/><rect x="410" y="421.4" width="1" height="32.1" fill="#a96f6f"/><rect x="411" y="421.4" width="1" height="32.1" fill="#513535"/><rect x="412" y="421.4" width="1" height="32.1" fill="#5c3c3c"/><rect x="413" y="421.4" width="1" height="32.1" fill="#7f5353"/><rect x="414" y="421.4" width="1" height="32.1" fill="#c48582"/><rect x="415" y="421.4" width="1" height="32.1" fill="#a66d6d"/><rect x="416" y="421.4" width="1" height="32.1" fill="#322121"/><rect x="417" y="421.4" width="1" height="32.1" fill="#382525"/><rect x="418" y="421.4" width="1" height="32.1" fill="#432c2c"/><rect x="419" y="421.4" width="1" height="32.1" fill="#805454"/><rect x="420" y="421.4" width="1" height="32.1" fill="#4a3030"/><rect x="421" y="421.4" width="1" height="32.1" fill="#6d4747"/><rect x="422" y="421.4" width="1" height="32.1" fill="#432c2c"/><rect x="423" y="421.4" width="1" height="32.1" fill="#915f5f"/><rect x="424" y="421.4" width="1" height="32.1" fill="#825555"/><rect x="425" y="421.4" width="1" height="32.1" fill="#764d4d"/><rect x="426" y="421.4" width="1" height="32.1" fill="#a96e6e"/><rect x="427" y="421.4" width="1" height="32.1" fill="#603f3f"/><rect x="428" y="421.4" width="1" height="32.1" fill="#885959"/><rect x="429" y="421.4" width="1" height="32.1" fill="#b77878"/><rect x="430" y="421.4" width="1" height="32.1" fill="#322121"/><rect x="431" y="421.4" width="1" height="32.1" fill="#a16969"/><rect x="432" y="421.4" width="1" height="32.1" fill="#875959"/><rect x="433" y="421.4" width="1" height="32.1" fill="#a66d6d"/><rect x="434" y="421.4" width="1" height="32.1" fill="#6a4545"/><rect x="435" y="421.4" width="1" height="32.1" fill="#402a2a"/><rect x="436" y="421.4" width="1" height="32.1" fill="#8b5b5b"/><rect x="437" y="421.4" width="1" height="32.1" fill="#7c5151"/><rect x="438" y="421.4" width="1" height="32.1" fill="#b47676"/><rect x="439" y="421.4" width="1" height="32.1" fill="#312020"/><rect x="440" y="421.4" width="1" height="32.1" fill="#cb9b8c"/><rect x="441" y="421.4" width="1" height="32.1" fill="#5e3d3d"/><rect x="442" y="421.4" width="1" height="32.1" fill="#664343"/><rect x="443" y="421.4" width="1" height="32.1" fill="#bb7a7a"/><rect x="444" y="421.4" width="1" height="32.1" fill="#a66d6d"/><rect x="445" y="421.4" width="1" height="32.1" fill="#704949"/><rect x="446" y="421.4" width="1" height="32.1" fill="#674444"/><rect x="447" y="421.4" width="1" height="32.1" fill="#a86e6e"/><rect x="448" y="421.4" width="1" height="32.1" fill="#392626"/><rect x="449" y="421.4" width="1" height="32.1" fill="#754c4c"/><rect x="450" y="421.4" width="1" height="32.1" fill="#865858"/><rect x="451" y="421.4" width="1" height="32.1" fill="#c89087"/><rect x="452" y="421.4" width="1" height="32.1" fill="#5d3d3d"/><rect x="453" y="421.4" width="1" height="32.1" fill="#c68b85"/><rect x="454" y="421.4" width="1" height="32.1" fill="#3c2727"/><rect x="455" y="421.4" width="1" height="32.1" fill="#9d6767"/><rect x="456" y="421.4" width="1" height="32.1" fill="#9c6666"/><rect x="457" y="421.4" width="1" height="32.1" fill="#6b4646"/><rect x="458" y="421.4" width="1" height="32.1" fill="#342222"/><rect x="459" y="421.4" width="1" height="32.1" fill="#8b5b5b"/><rect x="460" y="421.4" width="1" height="32.1" fill="#7b5151"/><rect x="461" y="421.4" width="1" height="32.1" fill="#4c3232"/><rect x="462" y="421.4" width="1" height="32.1" fill="#845757"/><rect x="463" y="421.4" width="1" height="32.1" fill="#603f3f"/><rect x="464" y="421.4" width="1" height="32.1" fill="#a16969"/><rect x="465" y="421.4" width="1" height="32.1" fill="#452d2d"/><rect x="466" y="421.4" width="1" height="32.1" fill="#7e5252"/><rect x="467" y="421.4" width="1" height="32.1" fill="#442c2c"/><rect x="468" y="421.4" width="1" height="32.1" fill="#372424"/><rect x="469" y="421.4" width="1" height="32.1" fill="#825555"/><rect x="470" y="421.4" width="1" height="32.1" fill="#d0aa93"/><rect x="471" y="421.4" width="1" height="32.1" fill="#8d5d5d"/><rect x="472" y="421.4" width="1" height="32.1" fill="#784e4e"/><rect x="473" y="421.4" width="1" height="32.1" fill="#472e2e"/><rect x="474" y="421.4" width="1" height="32.1" fill="#986464"/><rect x="475" y="421.4" width="1" height="32.1" fill="#af7272"/><rect x="476" y="421.4" width="1" height="32.1" fill="#c58783"/><rect x="477" y="421.4" width="1" height="32.1" fill="#613f3f"/><rect x="478" y="421.4" width="1" height="32.1" fill="#c58783"/><rect x="479" y="421.4" width="1" height="32.1" fill="#784f4f"/><rect x="480" y="421.4" width="1" height="32.1" fill="#855757"/><rect x="481" y="421.4" width="1" height="32.1" fill="#5d3d3d"/><rect x="482" y="421.4" width="1" height="32.1" fill="#c68c85"/><rect x="483" y="421.4" width="1" height="32.1" fill="#462e2e"/><rect x="484" y="421.4" width="1" height="32.1" fill="#4c3232"/><rect x="485" y="421.4" width="1" height="32.1" fill="#b07373"/><rect x="486" y="421.4" width="1" height="32.1" fill="#6a4646"/><rect x="487" y="421.4" width="1" height="32.1" fill="#382424"/><rect x="488" y="421.4" width="1" height="32.1" fill="#6e4848"/><rect x="489" y="421.4" width="1" height="32.1" fill="#714a4a"/><rect x="490" y="421.4" width="1" height="32.1" fill="#a46b6b"/><rect x="491" y="421.4" width="1" height="32.1" fill="#714a4a"/><rect x="492" y="421.4" width="1" height="32.1" fill="#ae7272"/><rect x="493" y="421.4" width="1" height="32.1" fill="#c68a84"/><rect x="494" y="421.4" width="1" height="32.1" fill="#885959"/><rect x="495" y="421.4" width="1" height="32.1" fill="#c99589"/><rect x="496" y="421.4" width="1" height="32.1" fill="#714a4a"/><rect x="497" y="421.4" width="1" height="32.1" fill="#4e3333"/><rect x="498" y="421.4" width="1" height="32.1" fill="#996464"/><rect x="499" y="421.4" width="1" height="32.1" fill="#b47676"/><rect x="500" y="421.4" width="1" height="32.1" fill="#ae7272"/><rect x="501" y="421.4" width="1" height="32.1" fill="#774e4e"/><rect x="502" y="421.4" width="1" height="32.1" fill="#563838"/><rect x="503" y="421.4" width="1" height="32.1" fill="#342222"/><rect x="504" y="421.4" width="1" height="32.1" fill="#694545"/><rect x="505" y="421.4" width="1" height="32.1" fill="#845757"/><rect x="506" y="421.4" width="1" height="32.1" fill="#402a2a"/><rect x="507" y="421.4" width="1" height="32.1" fill="#b77878"/><rect x="508" y="421.4" width="1" height="32.1" fill="#7b5151"/><rect x="509" y="421.4" width="1" height="32.1" fill="#563838"/><rect x="510" y="421.4" width="1" height="32.1" fill="#895a5a"/><rect x="511" y="421.4" width="1" height="32.1" fill="#966262"/><rect x="512" y="421.4" width="1" height="32.1" fill="#b97979"/><rect x="513" y="421.4" width="1" height="32.1" fill="#8e5d5d"/><rect x="514" y="421.4" width="1" height="32.1" fill="#a76d6d"/><rect x="515" y="421.4" width="1" height="32.1" fill="#493030"/><rect x="516" y="421.4" width="1" height="32.1" fill="#5e3d3d"/><rect x="517" y="421.4" width="1" height="32.1" fill="#553838"/><rect x="518" y="421.4" width="1" height="32.1" fill="#7d5252"/><rect x="519" y="421.4" width="1" height="32.1" fill="#4f3434"/><rect x="520" y="421.4" width="1" height="32.1" fill="#a06969"/><rect x="521" y="421.4" width="1" height="32.1" fill="#342222"/><rect x="522" y="421.4" width="1" height="32.1" fill="#3f2929"/><rect x="523" y="421.4" width="1" height="32.1" fill="#9a6565"/><rect x="524" y="421.4" width="1" height="32.1" fill="#b77777"/><rect x="525" y="421.4" width="1" height="32.1" fill="#482f2f"/><rect x="526" y="421.4" width="1" height="32.1" fill="#472e2e"/><rect x="527" y="421.4" width="1" height="32.1" fill="#614040"/><rect x="528" y="421.4" width="1" height="32.1" fill="#9d6767"/><rect x="529" y="421.4" width="1" height="32.1" fill="#8f5d5d"/><rect x="530" y="421.4" width="1" height="32.1" fill="#8b5b5b"/><rect x="531" y="421.4" width="1" height="32.1" fill="#bd7c7c"/><rect x="532" y="421.4" width="1" height="32.1" fill="#7b5151"/><rect x="533" y="421.4" width="1" height="32.1" fill="#885959"/><rect x="534" y="421.4" width="1" height="32.1" fill="#5d3d3d"/><rect x="535" y="421.4" width="1" height="32.1" fill="#4a3131"/><rect x="536" y="421.4" width="1" height="32.1" fill="#462e2e"/><rect x="537" y="421.4" width="1" height="32.1" fill="#835656"/><rect x="538" y="421.4" width="1" height="32.1" fill="#7e5353"/><rect x="539" y="421.4" width="1" height="32.1" fill="#b07373"/><rect x="540" y="421.4" width="1" height="32.1" fill="#422b2b"/><rect x="541" y="421.4" width="1" height="32.1" fill="#bc7b7b"/><rect x="542" y="421.4" width="1" height="32.1" fill="#332121"/><rect x="543" y="421.4" width="1" height="32.1" fill="#b17474"/><rect x="544" y="421.4" width="1" height="32.1" fill="#815555"/><rect x="545" y="421.4" width="1" height="32.1" fill="#b97979"/><rect x="546" y="421.4" width="1" height="32.1" fill="#ae7272"/><rect x="547" y="421.4" width="1" height="32.1" fill="#704949"/><rect x="548" y="421.4" width="1" height="32.1" fill="#4d3232"/><rect x="549" y="421.4" width="1" height="32.1" fill="#865757"/><rect x="550" y="421.4" width="1" height="32.1" fill="#734b4b"/><rect x="551" y="421.4" width="1" height="32.1" fill="#6d4747"/><rect x="552" y="421.4" width="1" height="32.1" fill="#865858"/><rect x="553" y="421.4" width="1" height="32.1" fill="#c48582"/><rect x="554" y="421.4" width="1" height="32.1" fill="#5d3d3d"/><rect x="555" y="421.4" width="1" height="32.1" fill="#301f1f"/><rect x="556" y="421.4" width="1" height="32.1" fill="#764d4d"/><rect x="557" y="421.4" width="1" height="32.1" fill="#5b3b3b"/><rect x="558" y="421.4" width="1" height="32.1" fill="#754c4c"/><rect x="559" y="421.4" width="1" height="32.1" fill="#543737"/>
</g>
<g stroke="#fff" stroke-width="1" shape-rendering="crispEdges" fill="none"><rect x="358.5" y="294.5" width="202.0" height="159.0"/><line x1="386.5" y1="294.5" x2="386.5" y2="297.5"/><line x1="386.5" y1="450.5" x2="386.5" y2="453.5"/><line x1="415.5" y1="294.5" x2="415.5" y2="297.5"/><line x1="415.5" y1="450.5" x2="415.5" y2="453.5"/><line x1="444.5" y1="294.5" x2="444.5" y2="297.5"/><line x1="444.5" y1="450.5" x2="444.5" y2="453.5"/><line x1="473.5" y1="294.5" x2="473.5" y2="297.5"/><line x1="473.5" y1="450.5" x2="473.5" y2="453.5"/><line x1="502.5" y1="294.5" x2="502.5" y2="297.5"/><line x1="502.5" y1="450.5" x2="502.5" y2="453.5"/><line x1="531.5" y1="294.5" x2="531.5" y2="297.5"/><line x1="531.5" y1="450.5" x2="531.5" y2="453.5"/><line x1="560.5" y1="294.5" x2="560.5" y2="297.5"/><line x1="560.5" y1="450.5" x2="560.5" y2="453.5"/><line x1="358.5" y1="309.5" x2="361.5" y2="309.5"/><line x1="557.5" y1="309.5" x2="560.5" y2="309.5"/><line x1="358.5" y1="341.5" x2="361.5" y2="341.5"/><line x1="557.5" y1="341.5" x2="560.5" y2="341.5"/><line x1="358.5" y1="373.5" x2="361.5" y2="373.5"/><line x1="557.5" y1="373.5" x2="560.5" y2="373.5"/><line x1="358.5" y1="405.5" x2="361.5" y2="405.5"/><line x1="557.5" y1="405.5" x2="560.5" y2="405.5"/><line x1="358.5" y1="437.5" x2="361.5" y2="437.5"/><line x1="557.5" y1="437.5" x2="560.5" y2="437.5"/></g>
<text class="pt" x="352.5" y="313.3" text-anchor="end">5</text>
<text class="pt" x="352.5" y="345.3" text-anchor="end">4</text>
<text class="pt" x="352.5" y="377.3" text-anchor="end">3</text>
<text class="pt" x="352.5" y="409.3" text-anchor="end">2</text>
<text class="pt" x="352.5" y="441.3" text-anchor="end">1</text>
<text class="pt" x="386.5" y="467" text-anchor="middle">100</text>
<text class="pt" x="415.5" y="467" text-anchor="middle">200</text>
<text class="pt" x="444.5" y="467" text-anchor="middle">300</text>
<text class="pt" x="473.5" y="467" text-anchor="middle">400</text>
<text class="pt" x="502.5" y="467" text-anchor="middle">500</text>
<text class="pt" x="531.5" y="467" text-anchor="middle">600</text>
<text class="pt" x="560.5" y="467" text-anchor="middle">700</text>
<text class="pt" transform="translate(338.5,377) rotate(-90)" text-anchor="middle" style="font-size:11.3px">Level number</text>
<g shape-rendering="crispEdges">
<rect x="358.5" y="494.5" width="202.0" height="159.0" fill="#150000"/>
<rect x="394" y="495.0" width="10" height="32.1" fill="#fff"/><rect x="404" y="495.0" width="9" height="32.1" fill="#d0a690"/>
<rect x="394" y="526.6" width="5.2" height="32.1" fill="#fff"/><rect x="399.2" y="526.6" width="4.8" height="32.1" fill="#d0a690"/><rect x="404" y="526.6" width="3.8" height="32.1" fill="#e0cea0"/>
<rect x="397" y="558.2" width="2" height="32.1" fill="#fff"/>
</g>
<g stroke="#fff" stroke-width="1" shape-rendering="crispEdges" fill="none"><rect x="358.5" y="494.5" width="202.0" height="159.0"/><line x1="386.5" y1="494.5" x2="386.5" y2="497.5"/><line x1="386.5" y1="650.5" x2="386.5" y2="653.5"/><line x1="415.5" y1="494.5" x2="415.5" y2="497.5"/><line x1="415.5" y1="650.5" x2="415.5" y2="653.5"/><line x1="444.5" y1="494.5" x2="444.5" y2="497.5"/><line x1="444.5" y1="650.5" x2="444.5" y2="653.5"/><line x1="473.5" y1="494.5" x2="473.5" y2="497.5"/><line x1="473.5" y1="650.5" x2="473.5" y2="653.5"/><line x1="502.5" y1="494.5" x2="502.5" y2="497.5"/><line x1="502.5" y1="650.5" x2="502.5" y2="653.5"/><line x1="531.5" y1="494.5" x2="531.5" y2="497.5"/><line x1="531.5" y1="650.5" x2="531.5" y2="653.5"/><line x1="560.5" y1="494.5" x2="560.5" y2="497.5"/><line x1="560.5" y1="650.5" x2="560.5" y2="653.5"/><line x1="358.5" y1="510.5" x2="361.5" y2="510.5"/><line x1="557.5" y1="510.5" x2="560.5" y2="510.5"/><line x1="358.5" y1="542.5" x2="361.5" y2="542.5"/><line x1="557.5" y1="542.5" x2="560.5" y2="542.5"/><line x1="358.5" y1="574.5" x2="361.5" y2="574.5"/><line x1="557.5" y1="574.5" x2="560.5" y2="574.5"/><line x1="358.5" y1="606.5" x2="361.5" y2="606.5"/><line x1="557.5" y1="606.5" x2="560.5" y2="606.5"/><line x1="358.5" y1="638.5" x2="361.5" y2="638.5"/><line x1="557.5" y1="638.5" x2="560.5" y2="638.5"/></g>
<text class="pt" x="352.5" y="514.0" text-anchor="end">5</text>
<text class="pt" x="352.5" y="546.0" text-anchor="end">4</text>
<text class="pt" x="352.5" y="578.0" text-anchor="end">3</text>
<text class="pt" x="352.5" y="610.0" text-anchor="end">2</text>
<text class="pt" x="352.5" y="642.0" text-anchor="end">1</text>
<text class="pt" x="386.5" y="667.5" text-anchor="middle">100</text>
<text class="pt" x="415.5" y="667.5" text-anchor="middle">200</text>
<text class="pt" x="444.5" y="667.5" text-anchor="middle">300</text>
<text class="pt" x="473.5" y="667.5" text-anchor="middle">400</text>
<text class="pt" x="502.5" y="667.5" text-anchor="middle">500</text>
<text class="pt" x="531.5" y="667.5" text-anchor="middle">600</text>
<text class="pt" x="560.5" y="667.5" text-anchor="middle">700</text>
<text class="pt" transform="translate(338.5,577) rotate(-90)" text-anchor="middle" style="font-size:11.3px">Level number</text>
</svg>
</body></html>
